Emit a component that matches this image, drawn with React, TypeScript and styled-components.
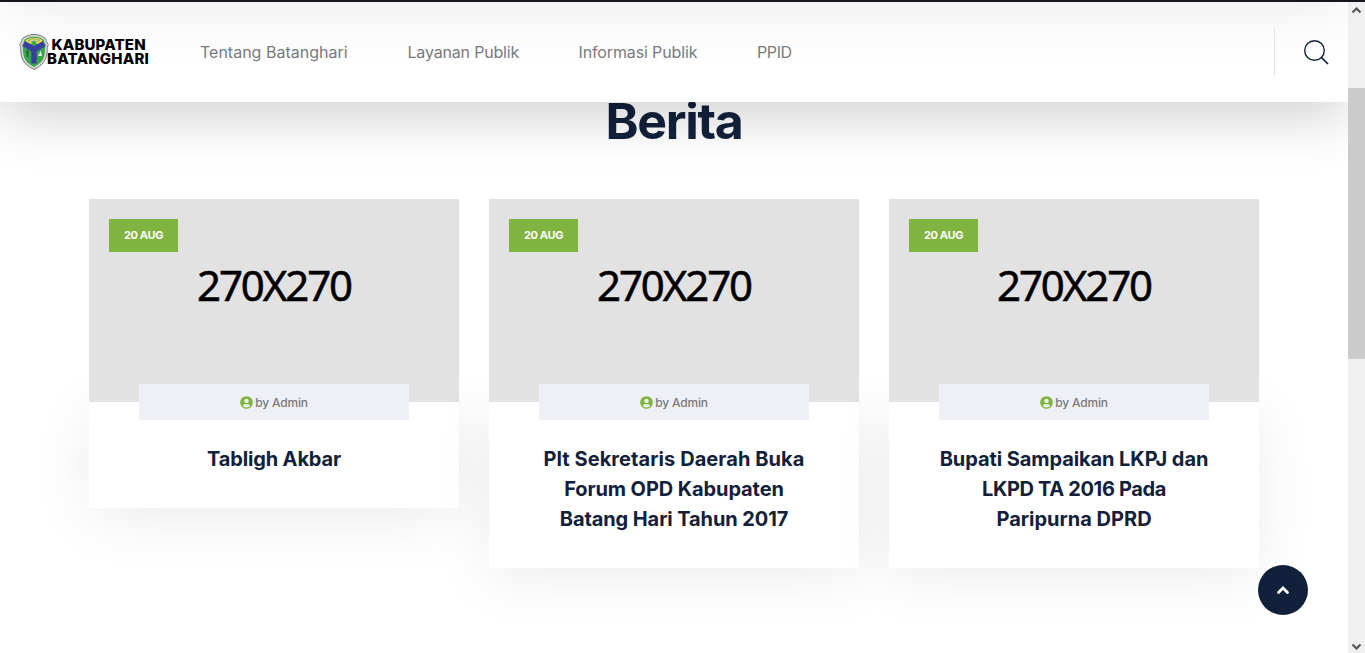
import React from "react";
import styled, { createGlobalStyle } from "styled-components";
import { FaUserCircle } from "react-icons/fa";

const NAVY = "#12213b";
const GREEN = "#7fb441";

const GlobalStyle = createGlobalStyle`
  * { box-sizing: border-box; }
  html, body { margin: 0; padding: 0; overflow: hidden; background: #fff; }
  body { font-family: Inter, "Open Sans", sans-serif; color: #787a7d; }
  h2, h3, p { margin: 0; }
  a { color: inherit; text-decoration: none; }
`;

const Screen = styled.div`
  display: flex;
  flex-direction: column;
  width: 1365px;
  height: 653px;
  overflow: hidden;
`;

const WindowEdge = styled.div`
  flex: 0 0 2px;
  background: #19141f;
`;

const Body = styled.div`
  display: flex;
  flex: 1;
  min-height: 0;
`;

const Page = styled.div`
  position: relative;
  width: 1348px;
  overflow: hidden;
`;

const Header = styled.header`
  position: relative;
  z-index: 5;
  display: flex;
  align-items: center;
  height: 100px;
  padding: 0 19px 0 19px;
  background: #fff;
  box-shadow: 0 10px 60px rgba(0, 0, 0, 0.21);
`;

const HeaderShade = styled.div`
  position: absolute;
  inset: 0;
  overflow: hidden;
  pointer-events: none;

  &::before {
    content: "";
    display: block;
    height: 100px;
    margin-top: -100px;
    box-shadow: 0 10px 60px rgba(0, 0, 0, 0.08);
  }
`;

const Logo = styled.a`
  position: relative;
  display: flex;
  align-items: center;
  width: 131px;
  height: 38px;
`;

const LogoText = styled.span`
  display: flex;
  flex-direction: column;
  margin-left: -2px;
  color: #000;
  font-weight: 800;
  font-size: 15px;
  line-height: 14.5px;
  white-space: nowrap;
`;

const LogoLine = styled.span<{ $indent?: number; $track: number }>`
  margin-left: ${(p) => p.$indent ?? 0}px;
  letter-spacing: ${(p) => p.$track}px;
`;

const Nav = styled.nav`
  position: relative;
  display: flex;
  gap: 60px;
  margin-left: 50px;
  font-size: 16px;
  line-height: 24px;
`;

const NavLink = styled.a<{ $width: number; $track: number }>`
  width: ${(p) => p.$width}px;
  letter-spacing: ${(p) => p.$track}px;
  white-space: nowrap;
`;

const SearchBox = styled.div`
  position: relative;
  display: flex;
  align-items: center;
  height: 48px;
  margin-left: auto;
  padding-left: 28px;
  border-left: 1px solid #dde4ec;
`;

const News = styled.section`
  display: flex;
  flex-direction: column;
  align-items: center;
  margin-top: -11px;
`;

const Heading = styled.h2`
  color: ${NAVY};
  font-size: 50px;
  font-weight: 700;
  line-height: 60px;
  letter-spacing: -1.25px;
`;

const CardRow = styled.div`
  display: grid;
  grid-template-columns: repeat(3, 370px);
  gap: 30px;
  align-items: start;
  margin-top: 48px;
`;

const Card = styled.article`
  position: relative;
  z-index: 0;
`;

const Placeholder = styled.div`
  position: relative;
  z-index: 1;
  display: flex;
  justify-content: center;
  height: 203px;
  padding-top: 57px;
  background: #e2e2e2;
  color: #000;
  font-family: "Noto Sans", sans-serif;
  font-size: 42px;
  line-height: 58px;
  letter-spacing: -2.1px;
  -webkit-text-stroke: 0.5px #000;
`;

const DateBadge = styled.span`
  position: absolute;
  top: 20px;
  left: 20px;
  width: 69px;
  height: 33px;
  background: ${GREEN};
  color: #fff;
  font-family: Inter, sans-serif;
  font-size: 11px;
  font-weight: 700;
  line-height: 33px;
  letter-spacing: -0.35px;
  text-align: center;
  -webkit-text-stroke: 0;
`;

const CardBody = styled.div`
  padding: 0 50px 34px;
  background: #fff;
  box-shadow: 0 10px 60px rgba(0, 0, 0, 0.08);
`;

const Author = styled.p`
  position: relative;
  top: -18px;
  z-index: 2;
  display: flex;
  align-items: center;
  justify-content: center;
  gap: 2px;
  height: 36px;
  background: #eff0f5;
  font-size: 12px;
  font-weight: 500;
  letter-spacing: -0.18px;

  svg { color: ${GREEN}; }
`;

const Title = styled.h3`
  display: flex;
  flex-direction: column;
  align-items: center;
  margin-top: 6px;
  color: ${NAVY};
  font-size: 20px;
  font-weight: 700;
  line-height: 30px;
`;

const TitleLine = styled.span<{ $track: number }>`
  letter-spacing: ${(p) => p.$track}px;
  white-space: nowrap;
`;

const BackToTop = styled.button`
  position: absolute;
  right: 40px;
  bottom: 38px;
  display: flex;
  align-items: center;
  justify-content: center;
  width: 50px;
  height: 50px;
  padding: 0;
  border: 0;
  border-radius: 50%;
  background: ${NAVY};
`;

const Scrollbar = styled.div`
  display: flex;
  flex-direction: column;
  justify-content: space-between;
  width: 17px;
  background: #f0f0f0;

  svg { display: block; }
`;

const Thumb = styled.div`
  height: 271px;
  margin: 69px 0 auto;
  background: #cbcbcb;
`;

const Crest = () => (
  <svg width="30" height="36" viewBox="0 0 30 36">
    <path d="M15 .5C10.500 .5 7 2 3.500 4.500 3 7 2 8.500 .7 10.500c.8 2 1.100 3.500 1.100 6C2 26 6 31 15 35.500 24 31 28 26 28.200 16.500c0-2.500.3-4 1.100-6C28 8.500 27 7 26.500 4.500 23 2 19.500 .5 15 .5Z" fill="#d5d5d5" stroke="#777" strokeWidth="1" />
    <path d="M15 2.800c-4 0-7 1.200-9.700 3.200C5 8 4.200 9.500 3.200 11c.7 2 .9 3.500.9 5.500C4.200 24.500 7.500 29 15 33c7.500-4 10.800-8.500 10.900-16.500 0-2 .2-3.500.9-5.500-1-1.500-1.800-3-2.100-5C22 4 19 2.800 15 2.800Z" fill="#37a54a" />
    <path d="M7 6c4-3 12-3 16 0l1.500 3L15 12 5.500 9Z" fill="#e4dc55" />
    <path d="M9 6.500c3-2 9-2 12 0-3 1.500-9 1.500-12 0Z" fill="#d8d2b0" stroke="#a59b35" strokeWidth=".7" />
    <path d="M15 6l3.500 4.500L15 12l-3.500-1.500Z" fill="#37a54a" />
    <path d="M6 7 15 12l9-5 2.300 5.300-8.600 5.200v12h-5.400v-12L3.700 12.300Z" fill="#37409f" />
    <path d="M8.500 17v5M7 22h3M8.500 16l-1 3h2Z" stroke="#1d5e36" strokeWidth="1" fill="none" />
    <path d="M21.800 16.500 23 22h-4Z" fill="#dfeee0" />
  </svg>
);

const SearchIcon = () => (
  <svg width="26" height="26" viewBox="0 0 26 26" fill="none" stroke={NAVY} strokeWidth="1.4">
    <circle cx="11.500" cy="11.500" r="9.800" />
    <path d="M18.300 18.300 25 25" strokeWidth="1.700" />
  </svg>
);

const ScrollArrow = ({ down = false }: { down?: boolean }) => (
  <svg width="17" height="17" viewBox="0 0 17 17" fill="none" stroke="#555" strokeWidth="2.200">
    <path d={down ? "M4.500 8.500 8.500 12.500 12.500 8.500" : "M4.500 10.500 8.500 6.500 12.500 10.500"} />
  </svg>
);

const navItems = [
  { label: "Tentang Batanghari", width: 147.5, track: 0 },
  { label: "Layanan Publik", width: 111, track: -0.18 },
  { label: "Informasi Publik", width: 118.5, track: -0.13 },
  { label: "PPID", width: 36, track: -0.4 },
];

const articles = [
  [{ text: "Tabligh Akbar", track: -0.15 }],
  [
    { text: "Plt Sekretaris Daerah Buka", track: 0.07 },
    { text: "Forum OPD Kabupaten", track: -0.1 },
    { text: "Batang Hari Tahun 2017", track: -0.1 },
  ],
  [
    { text: "Bupati Sampaikan LKPJ dan", track: -0.08 },
    { text: "LKPD TA 2016 Pada", track: -0.35 },
    { text: "Paripurna DPRD", track: 0 },
  ],
];

export default function App() {
  return (
    <Screen>
      <GlobalStyle />
      <WindowEdge />
      <Body>
        <Page>
          <Header>
            <HeaderShade />
            <Logo href="#">
              <Crest />
              <LogoText>
                <LogoLine $indent={4.5} $track={0.15}>KABUPATEN</LogoLine>
                <LogoLine $track={0.17}>BATANGHARI</LogoLine>
              </LogoText>
            </Logo>
            <Nav>
              {navItems.map((n) => (
                <NavLink key={n.label} href="#" $width={n.width} $track={n.track}>{n.label}</NavLink>
              ))}
            </Nav>
            <SearchBox><SearchIcon /></SearchBox>
          </Header>
          <News>
            <Heading>Berita</Heading>
            <CardRow>
              {articles.map((lines) => (
                <Card key={lines[0].text}>
                  <Placeholder>
                    270X270
                    <DateBadge>20 AUG</DateBadge>
                  </Placeholder>
                  <CardBody>
                    <Author><FaUserCircle size={13} />by Admin</Author>
                    <Title>
                      {lines.map((l) => (
                        <TitleLine key={l.text} $track={l.track}>{l.text}</TitleLine>
                      ))}
                    </Title>
                  </CardBody>
                </Card>
              ))}
            </CardRow>
          </News>
          <BackToTop aria-label="Back to top">
            <svg width="14" height="10" viewBox="0 0 14 10" fill="none" stroke="#fff" strokeWidth="2.800" strokeLinecap="round">
              <path d="M2.500 7.500 7 3l4.500 4.500" />
            </svg>
          </BackToTop>
        </Page>
        <Scrollbar>
          <ScrollArrow />
          <Thumb />
          <ScrollArrow down />
        </Scrollbar>
      </Body>
    </Screen>
  );
}
